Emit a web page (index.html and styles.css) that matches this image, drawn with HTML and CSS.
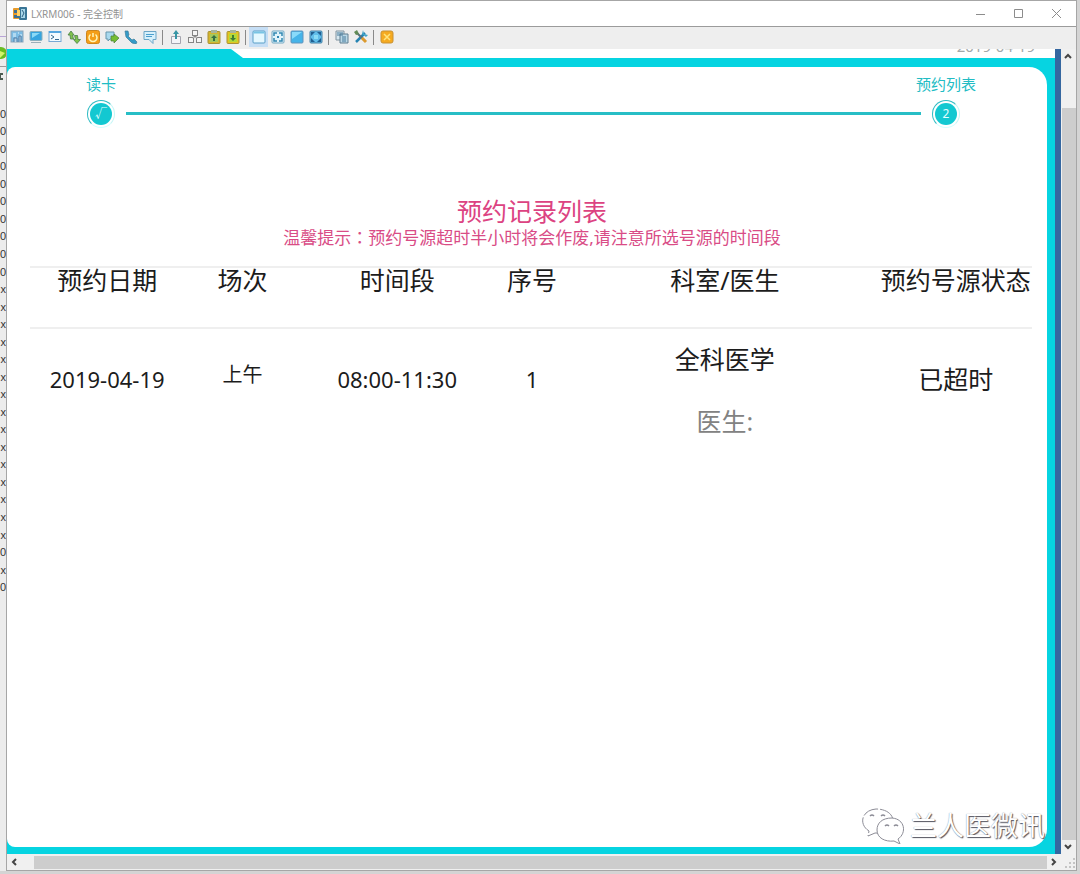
FILE: index.html
```html
<!DOCTYPE html>
<html lang="zh-CN">
<head>
<meta charset="utf-8">
<title>LXRM006 - 完全控制</title>
<link rel="stylesheet" href="styles.css">
</head>
<body>
<div class="desktop">
  <aside class="behind">
    <svg class="behind-top" viewBox="0 0 7 105" width="7" height="105" aria-hidden="true">
      <path d="M0 36.500h6" stroke="#b9a4d6"/><path d="M0 66.500h6" stroke="#999"/>
      <circle cx="1" cy="53" r="6" fill="#69bd22"/><path d="M0 51l5 2-5 5" fill="#d3f36b"/>
      <path d="M0 73h3v2H1v3h2v2H0" fill="#4a5a50"/>
    </svg>
    <ul class="behind-list">
      <li>0</li><li>0</li><li>0</li><li>0</li><li>0</li><li>0</li><li>0</li><li>0</li><li>0</li><li>0</li>
      <li>x</li><li>x</li><li>x</li><li>x</li><li>x</li><li>x</li><li>x</li><li>x</li><li>x</li><li>x</li><li>x</li><li>x</li><li>x</li><li>x</li><li>x</li>
      <li>0</li><li>x</li><li>0</li>
    </ul>
  </aside>

  <div class="window">
    <header class="titlebar">
      <svg width="14" height="14" viewBox="0 0 14 14" aria-hidden="true">
        <rect x="0" y="1" width="8" height="11" rx="1" fill="#e79b2b"/><path d="M1 3h3v3H1zM1 8h5v3H1z" fill="#3d6f93"/>
        <rect x="6" y="0" width="8" height="13" rx="1" fill="#397596"/><path d="M8 2h4v9H8z" fill="#a9d7ea"/><path d="M9 3l2 3-2 4" fill="none" stroke="#2d607f"/><path d="M4 3h3v6H4z" fill="#ffd269"/>
      </svg>
      <h1 class="title">LXRM006 - 完全控制</h1>
      <div class="window-buttons">
        <button aria-label="最小化"><svg width="10" height="10" viewBox="0 0 10 10"><path d="M0 5.500h9"/></svg></button>
        <button aria-label="最大化"><svg width="10" height="10" viewBox="0 0 10 10"><path d="M.5 .5h8v8h-8z"/></svg></button>
        <button aria-label="关闭"><svg width="10" height="10" viewBox="0 0 10 10"><path d="M0 0l9 9M9 0L0 9"/></svg></button>
      </div>
    </header>

    <nav class="toolbar" aria-label="工具栏">
      <button aria-label="远程屏幕"><svg viewBox="0 0 14 14"><rect x="1" y="1" width="12" height="11" fill="#7cbce4" stroke="#8aa4b8"/><path d="M3 4h3M3 6h3M8 3h1M10 5h2" stroke="#e4f7ff"/><path d="M4 12V8h3v4M9 12V6h2v6" stroke="#557fa6" fill="#b4d4e8"/></svg></button>
      <button aria-label="显示器"><svg viewBox="0 0 14 14"><rect x="1" y="1.500" width="12" height="9" rx="1" fill="#36a5df" stroke="#8bafbd"/><path d="M3 3h8L3 8z" fill="#8bdaf6"/><path d="M2 12.500h10" stroke="#9aaeb8"/></svg></button>
      <button aria-label="命令行"><svg viewBox="0 0 14 14"><rect x="1" y="1.500" width="12" height="10" fill="#f3fbff" stroke="#79a8d3"/><path d="M1 2h12" stroke="#55a6df" stroke-width="2"/><path d="M3 5l3 2-3 2M7 9.500h4" fill="none" stroke="#34688f"/></svg></button>
      <button aria-label="传输文件"><svg viewBox="0 0 14 14"><g fill="#7fc34b" stroke="#4a7f49" stroke-width=".8"><path d="M4 1l3 4H5.500l1 4h-3L3 5H1z"/><path d="M10 13.500L6.500 9.500H8.500L7.500 5.500h3l.5 4h2.500z"/></g></svg></button>
      <button aria-label="电源"><svg viewBox="0 0 14 14"><rect x=".5" y=".5" width="13" height="13" rx="2" fill="#f49e18" stroke="#cc851c"/><path d="M4.500 4.500a4 4 0 1 0 5 0M7 3v4" fill="none" stroke="#fff6b8" stroke-width="1.500"/></svg></button>
      <button aria-label="聊天"><svg viewBox="0 0 14 14"><path d="M1 2h8v7H5l-2 2V9H1z" fill="#a9d9ee" stroke="#6797ad"/><path d="M6 6h3V4l5 4-5 5v-2H6z" fill="#75bd32" stroke="#497f38" stroke-width=".7"/></svg></button>
      <button aria-label="语音"><svg viewBox="0 0 14 14"><path d="M1 1l3 0 1 4-1 1 4 4 2-1 3 3-1 2-4-1-6-6z" fill="#349bc8" stroke="#3c7c99" stroke-width=".7"/></svg></button>
      <button aria-label="消息"><svg viewBox="0 0 14 14"><path d="M1 1.500h12v8h-3v4l-4-4H1z" fill="#d7f0fb" stroke="#6ba5c6"/><path d="M3 4.500h8M3 6.500h6" stroke="#4b9fce"/></svg></button>
      <span class="separator"></span>
      <button aria-label="发送"><svg viewBox="0 0 14 14"><path d="M2.500 6.500h9v7h-9z" fill="#f4f4f8" stroke="#a4a4ae"/><path d="M7 0l3 4H8v5H6V4H4z" fill="#3895a5"/></svg></button>
      <button aria-label="组合键"><svg viewBox="0 0 14 14"><g fill="#f5f5f5" stroke="#858585"><rect x="4.500" y=".5" width="5" height="5"/><rect x=".5" y="7.500" width="5" height="5"/><rect x="8.500" y="7.500" width="5" height="5"/><path d="M7 5v3M4 8l3-2 3 2"/></g></svg></button>
      <button aria-label="获取剪贴板"><svg viewBox="0 0 14 14"><rect x="1" y="1.500" width="12" height="12" rx="1" fill="#d4b52e" stroke="#a79137"/><path d="M4 0h6v3H4z" fill="#a8b59d"/><path d="M3 4h8v8H3z" fill="#a5c95c"/><path d="M7 5l3 3H8v3H6V8H4z" fill="#336f42"/></svg></button>
      <button aria-label="发送剪贴板"><svg viewBox="0 0 14 14"><rect x="1" y="1.500" width="12" height="12" rx="1" fill="#e2c520" stroke="#a79137"/><path d="M4 0h6v3H4z" fill="#a8b59d"/><path d="M3 4h8v8H3z" fill="#b1d93a"/><path d="M7 11l3-3H8V5H6v3H4z" fill="#3c7c34"/></svg></button>
      <span class="separator"></span>
      <button class="active" aria-label="窗口"><svg viewBox="0 0 14 14"><rect x="1" y="1" width="12" height="12" rx="1" fill="#e4f8ff" stroke="#5a9fc8"/><path d="M1.500 2.500h11" stroke="#78c5e5" stroke-width="2"/></svg></button>
      <button aria-label="拉伸"><svg viewBox="0 0 14 14"><rect x="1" y="1" width="12" height="12" rx="1" fill="#e1f4fb" stroke="#72a7c2"/><path d="M3 6V3h3M8 3h3v3M3 8v3h3M8 11h3V8" fill="none" stroke="#3186b1" stroke-width="1.500"/><path d="M6 6h2v2H6z" fill="#3186b1"/></svg></button>
      <button aria-label="全屏"><svg viewBox="0 0 14 14"><rect x="1" y="1" width="12" height="12" rx="1" fill="#46b4e9" stroke="#6294bc"/><path d="M2 2h10L2 9z" fill="#89dafa"/></svg></button>
      <button aria-label="全屏拉伸"><svg viewBox="0 0 14 14"><rect x="1" y="1" width="12" height="12" rx="1" fill="#5fbdea" stroke="#477fa4"/><path d="M2 2h4L2 6zM8 2h4v4zM2 8v4h4zM12 8v4H8z" fill="#205f91"/><path d="M5 5h4v4H5z" fill="#89dcf7"/></svg></button>
      <span class="separator"></span>
      <button aria-label="截图"><svg viewBox="0 0 14 14"><path d="M1 1h8v9H1z" fill="#d6e7ef" stroke="#8194a0"/><path d="M5 4h8v9H5z" fill="#b9d7e6" stroke="#607f91"/><path d="M2 3h6M2 5h6M7 7h4M7 9h4M7 11h4" stroke="#467b9b"/></svg></button>
      <button aria-label="选项"><svg viewBox="0 0 14 14"><path d="M2 12L11 3" stroke="#2784b2" stroke-width="2.500"/><path d="M9 0l1 4 4 1-2 2-4-3z" fill="#43a4c8"/><path d="M2 2l9 9" stroke="#57717b" stroke-width="2"/><path d="M8 8l4 4" stroke="#dc9a2d" stroke-width="3"/><path d="M0 2l3-2 2 4-3 1z" fill="#628b56"/></svg></button>
      <span class="separator"></span>
      <button aria-label="断开"><svg viewBox="0 0 14 14"><rect x="1" y="1" width="12" height="12" rx="2" fill="#f5aa20" stroke="#c89132"/><path d="M4 4l6 6M10 4l-6 6" stroke="#ffe47b" stroke-width="1.500"/></svg></button>
    </nav>

    <div class="viewport">
      <main class="kiosk">
        <div class="kiosk-top">
          <div class="kiosk-tab"></div>
          <time class="clock" datetime="2019-04-19">2019-04-19</time>
        </div>
        <section class="panel">
          <div class="steps">
            <div class="step"><span class="step-label">读卡</span><span class="step-dot"><b>√</b></span></div>
            <div class="step-line"></div>
            <div class="step"><span class="step-label">预约列表</span><span class="step-dot"><b>2</b></span></div>
          </div>
          <h2 class="heading">预约记录列表</h2>
          <p class="hint">温馨提示<span class="colon" lang="zh-TW">：</span>预约号源超时半小时将会作废,请注意所选号源的时间段</p>
          <table class="records">
            <colgroup><col class="c-date"><col class="c-session"><col class="c-time"><col class="c-number"><col class="c-dept"><col class="c-status"></colgroup>
            <thead>
              <tr><th>预约日期</th><th>场次</th><th>时间段</th><th>序号</th><th>科室/医生</th><th>预约号源状态</th></tr>
            </thead>
            <tbody>
              <tr>
                <td class="digits">2019-04-19</td>
                <td class="session">上午</td>
                <td class="digits">08:00-11:30</td>
                <td class="digits">1</td>
                <td class="clinic"><div>全科医学</div><div class="doctor">医生:</div></td>
                <td>已超时</td>
              </tr>
            </tbody>
          </table>
        </section>
        <div class="watermark">
          <svg width="44" height="36" viewBox="0 0 44 36" aria-hidden="true">
            <g fill="#fff" stroke="#8c8c96" stroke-width="1">
              <path d="M8 23C-3 16 1 2 15 1c10 0 17 5 17 12 0 8-8 13-18 12l-7 3z" stroke-dasharray="16 2"/>
              <path d="M37 31c9-6 7-20-6-21-10 0-15 5-15 12 0 8 8 12 17 11l6 3z"/>
              <path d="M9 8q2-2 4 0M20 8q2-2 4 0M24 18q2-2 4 0M33 18q2-2 4 0" fill="none" stroke-width="1.500"/>
            </g>
          </svg>
          <span>兰人医微讯</span>
        </div>
      </main>
      <div class="scroll-y">
        <button aria-label="向上滚动"><svg width="8" height="6" viewBox="0 0 8 6"><path d="M1 5l3-3 3 3"/></svg></button>
        <div class="thumb-y"></div>
        <button aria-label="向下滚动"><svg width="8" height="6" viewBox="0 0 8 6"><path d="M1 1l3 3 3-3"/></svg></button>
      </div>
      <div class="scroll-x">
        <button aria-label="向左滚动"><svg width="6" height="8" viewBox="0 0 6 8"><path d="M5 1L2 4l3 3"/></svg></button>
        <div class="thumb-x"></div>
        <button aria-label="向右滚动"><svg width="6" height="8" viewBox="0 0 6 8"><path d="M1 1l3 3-3 3"/></svg></button>
      </div>
      <svg class="grip" width="15" height="16" viewBox="0 0 15 16" aria-hidden="true"><path d="M12 4h2v2h-2zM8 8h2v2H8zM12 8h2v2h-2zM4 12h2v2H4zM8 12h2v2H8zM12 12h2v2h-2z" fill="#c4c4c4"/></svg>
    </div>
  </div>
</div>
</body>
</html>
```
FILE: styles.css
```css
* { box-sizing: border-box; margin: 0; }

body {
  font-family: "Noto Sans", "Noto Sans CJK SC", sans-serif;
  color: #1c1c1c;
  background: #d4d4d4;
}

button {
  display: flex;
  align-items: center;
  justify-content: center;
  padding: 0;
  border: 0;
  background: transparent;
}

.desktop {
  display: flex;
  height: 100vh;
  padding: 0 3px 3px 0;
}

.behind {
  display: flex;
  flex-direction: column;
  width: 6px;
  overflow: hidden;
  background: #ececec;
}

.behind-top { flex: none; }

.behind-list {
  display: flex;
  flex: 1;
  flex-direction: column;
  margin-bottom: 275px;
  padding: 0;
  list-style: none;
  font: 11px/16px "Liberation Sans", sans-serif;
  color: #333;
}

.behind-list li {
  display: flex;
  flex: 1;
  align-items: center;
  justify-content: flex-end;
}

.window {
  display: flex;
  flex: 1;
  flex-direction: column;
  min-width: 0;
  border: 1px solid #a6a6a6;
  background: #fff;
}

.titlebar {
  display: flex;
  flex: none;
  align-items: center;
  gap: 4px;
  height: 25px;
  padding-left: 6px;
}

.title {
  flex: 1;
  font-size: 10px;
  font-weight: 400;
  line-height: 14px;
  color: #929292;
}

.window-buttons { display: flex; }
.window-buttons button { width: 38px; height: 24px; }
.window-buttons svg { fill: none; stroke: #8c8c8c; }

.toolbar {
  display: flex;
  flex: none;
  align-items: center;
  height: 23px;
  padding-bottom: 2px;
  border-top: 1px solid #9b9b9b;
  background: #eee;
}

.toolbar button { width: 19px; height: 20px; }
.toolbar button svg { width: 14px; height: 14px; }
.toolbar .active { background: #c5def5; }
.separator { width: 1px; height: 15px; margin: 0 3px; background: #898989; }

.viewport {
  display: grid;
  flex: 1;
  grid-template-rows: 1fr 16px;
  grid-template-columns: 1fr 15px;
  min-height: 0;
  background: #f0f0f0;
}

.kiosk {
  position: relative;
  display: flex;
  flex-direction: column;
  min-width: 0;
  padding-bottom: 7px;
  border-right: 6px solid #3567a0;
  background: #06d4e1;
}

.kiosk-top {
  display: flex;
  flex: none;
  height: 9px;
  margin-bottom: 9px;
  overflow: hidden;
  background: #fff;
}

.kiosk-tab {
  width: 236px;
  background: #06d4e1;
  clip-path: polygon(0 0, 224px 0, 236px 100%, 0 100%);
}

.clock {
  align-self: flex-end;
  margin-left: auto;
  padding: 0 20px 2px 0;
  font-size: 15px;
  line-height: 20px;
  color: #a2a8a8;
}

.panel {
  flex: 1;
  margin-right: 8px;
  border-radius: 8px 18px 18px 8px;
  background: #fff;
}

.steps {
  display: flex;
  align-items: flex-end;
  gap: 10px;
  padding: 6px 86px 0 79px;
}

.step {
  display: flex;
  flex-direction: column;
  align-items: center;
  width: 30px;
}

.step-label {
  font-size: 15px;
  line-height: 22px;
  white-space: nowrap;
  color: #22bcc4;
}

.step-dot {
  display: grid;
  width: 28px;
  height: 28px;
  margin-top: 5px;
  padding: 2px;
  border: 1px solid #30bcc4;
  border-right-color: #c5f6f6;
  border-bottom-color: #d5ffff;
  border-radius: 50%;
}

.step-dot b {
  border-radius: 50%;
  background: #13c8d1;
  font-size: 12px;
  font-weight: 400;
  line-height: 22px;
  text-align: center;
  color: #e6ffff;
}

.step-line {
  flex: 1;
  height: 3px;
  margin-bottom: 13px;
  background: #28bec6;
}

.heading {
  margin-top: 66px;
  padding-left: 10px;
  font-size: 25px;
  font-weight: 400;
  line-height: 34px;
  text-align: center;
  color: #dc4382;
}

.hint {
  padding-left: 10px;
  font-size: 17px;
  line-height: 18px;
  text-align: center;
  color: #d94c86;
}

.colon { font-family: "Noto Sans CJK TC", sans-serif; }

.records {
  width: calc(100% - 38px);
  margin: 19px 15px 0 23px;
  border-collapse: collapse;
  table-layout: fixed;
  font-size: 25px;
  line-height: 30px;
  text-align: center;
}

.c-date { width: 15.4%; }
.c-session { width: 11.6%; }
.c-time { width: 19.3%; }
.c-number { width: 7.6%; }
.c-dept { width: 30.9%; }
.c-status { width: 15.2%; }

.records th {
  height: 61px;
  padding: 0;
  border-top: 2px solid #efefef;
  border-bottom: 2px solid #efefef;
  font-weight: 400;
  line-height: 24px;
  vertical-align: top;
  white-space: nowrap;
}

.records td { padding: 15px 0 22px; }
.records .digits { font-size: 22px; }
.records .session { padding-bottom: 30px; font-size: 20px; }
.records .clinic { padding-bottom: 0; }
.doctor { margin-top: 32px; color: #828282; }

.watermark {
  position: absolute;
  right: 10px;
  bottom: 8px;
  display: flex;
  align-items: center;
  gap: 5px;
  font-size: 27px;
  line-height: 40px;
  color: #fff;
  text-shadow: 1px 1px 1px #555560, 0 0 1px #85858f;
}

.scroll-y, .scroll-x { display: flex; }
.scroll-y { flex-direction: column; }
.scroll-y button, .scroll-x button { flex: none; width: 14px; height: 14px; }
.scroll-y svg, .scroll-x svg { fill: none; stroke: #454545; stroke-width: 2; }
.thumb-y { flex: 1; margin: 45px 0 0 1px; background: #cdcdcd; }
.scroll-x { align-items: center; }
.thumb-x { flex: 1; align-self: stretch; margin: 2px 0 1px 13px; background: #cdcdcd; }
```
